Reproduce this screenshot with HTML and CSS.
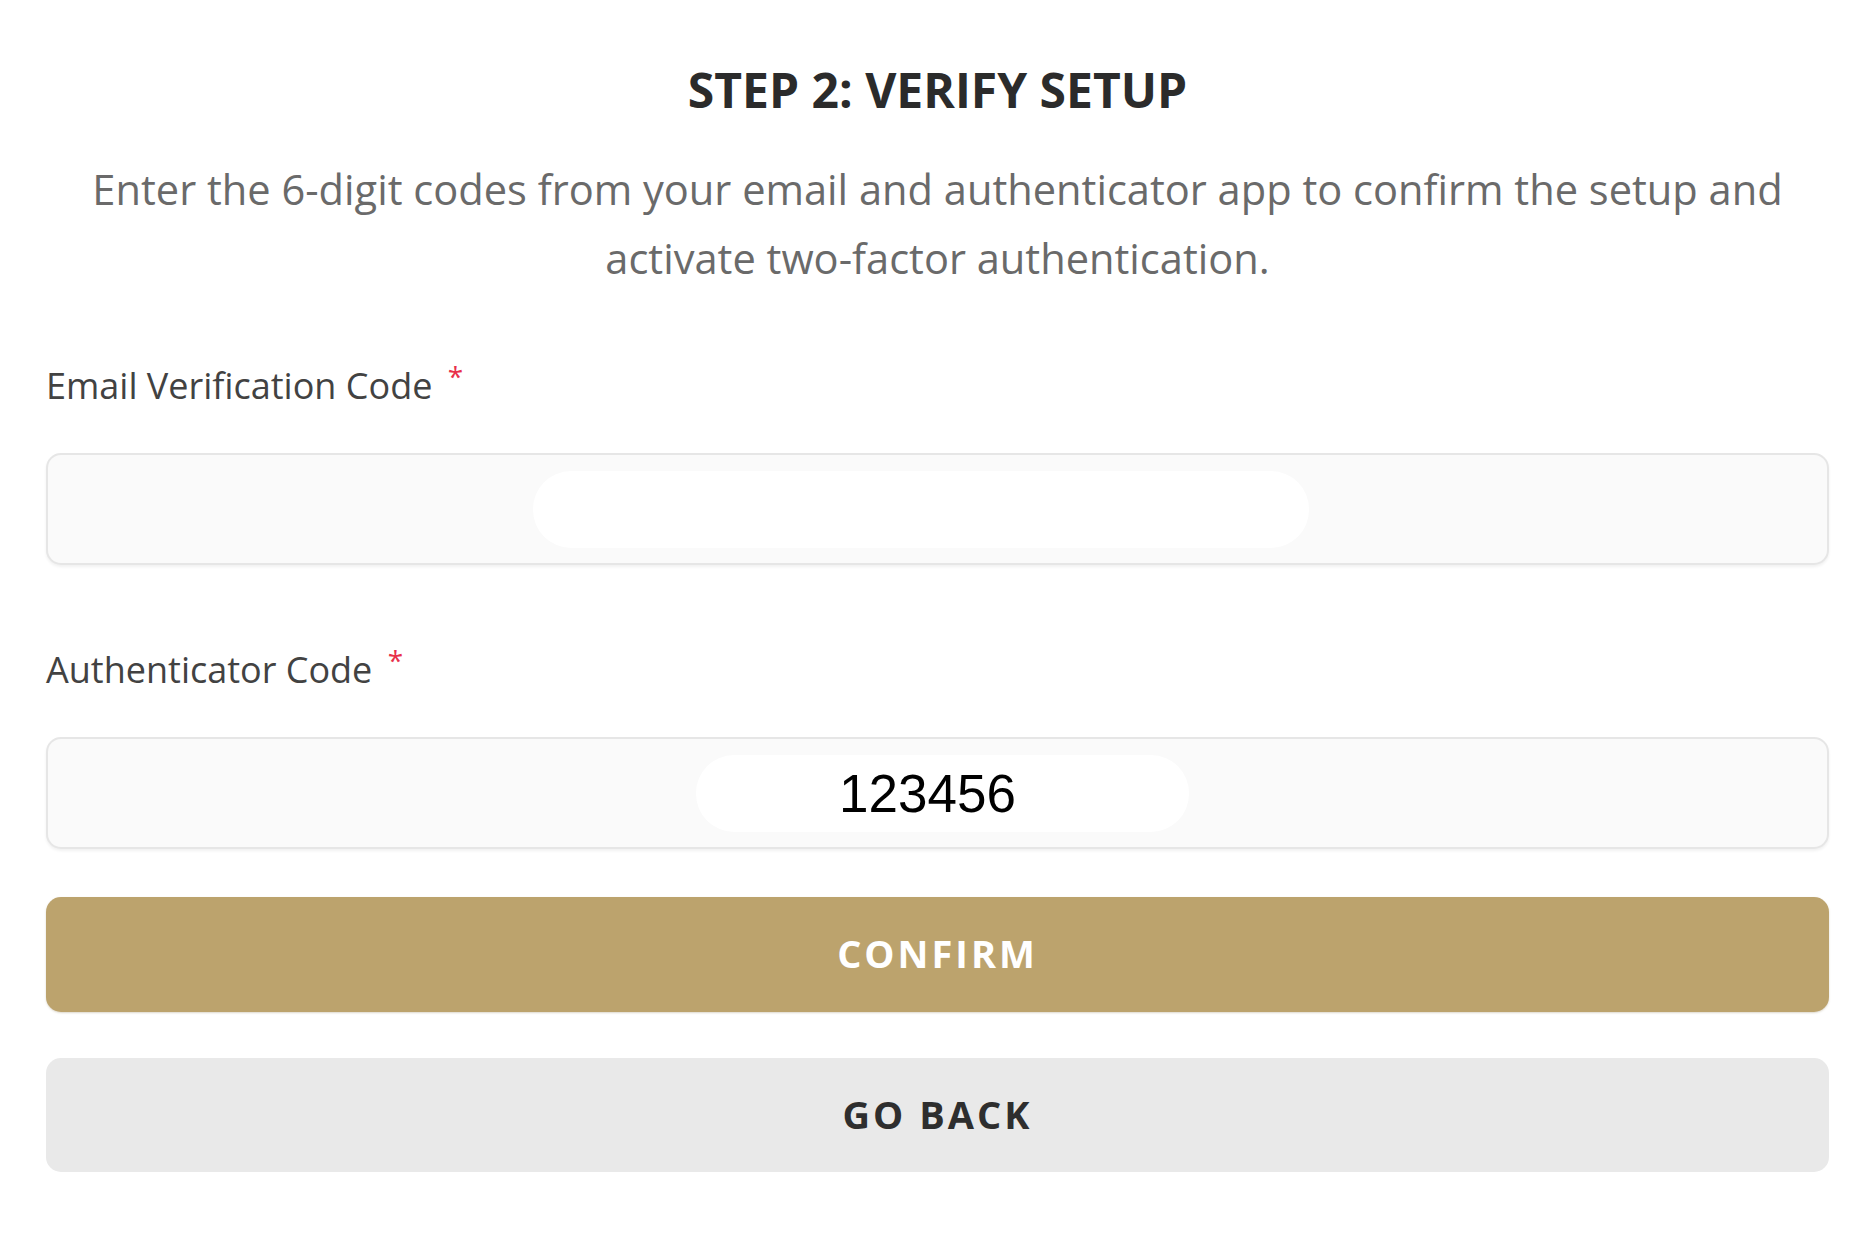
FILE: index.html
```html
<!DOCTYPE html>
<html lang="en">
<head>
<meta charset="utf-8">
<title>Step 2: Verify Setup</title>
<link rel="stylesheet" href="styles.css">
</head>
<body>
<main class="panel">
  <h1 class="title">STEP 2: VERIFY SETUP</h1>
  <p class="intro">Enter the 6-digit codes from your email and authenticator app to confirm the setup and activate two-factor authentication.</p>

  <div class="group group-email">
    <label class="label">Email Verification Code <span class="req">*</span></label>
    <div class="field"><span class="blob blob-wide"></span></div>
  </div>

  <div class="group group-auth">
    <label class="label">Authenticator Code <span class="req">*</span></label>
    <div class="field"><span class="blob blob-narrow">123456</span></div>
  </div>

  <button class="btn btn-confirm">CONFIRM</button>
  <button class="btn btn-back">GO BACK</button>
</main>
</body>
</html>
```

FILE: styles.css
```css
html, body {
  margin: 0;
  padding: 0;
  background: #ffffff;
}

body {
  font-family: "Open Sans", "Noto Sans", sans-serif;
}

.panel {
  width: 1783px;
  margin-left: 46px;
  padding-top: 60px;
  display: flex;
  flex-direction: column;
}

.title {
  margin: 0;
  font-size: 48px;
  line-height: 60px;
  font-weight: 700;
  color: #2b2b2b;
  text-align: center;
}

.intro {
  margin: 35px 0 0;
  font-size: 41.6px;
  line-height: 69px;
  font-weight: 400;
  color: #6a6a6a;
  text-align: center;
  padding: 0 20px;
}

.group {
  display: flex;
  flex-direction: column;
}

.group-email {
  margin-top: 61px;
}

.group-auth {
  margin-top: 73px;
}

.label {
  display: block;
  font-size: 36px;
  line-height: 44px;
  font-weight: 500;
  color: #424242;
}

.req {
  color: #e8304a;
  font-size: 28px;
  vertical-align: 12px;
  margin-left: 6px;
}

.field {
  margin-top: 45px;
  height: 108px;
  box-sizing: content-box;
  border: 2px solid #e6e6e6;
  border-radius: 15px;
  background: #fafafa;
  box-shadow: 0 2px 3px rgba(0, 0, 0, 0.06);
  display: flex;
  align-items: center;
  justify-content: center;
}

.blob {
  display: flex;
  align-items: center;
  justify-content: center;
  box-sizing: border-box;
  height: 77px;
  background: #ffffff;
  border-radius: 38px;
  font-family: "Liberation Sans", Arial, sans-serif;
  font-size: 53px;
  color: #000000;
}

.blob-wide {
  width: 776px;
  margin-right: 34px;
}

.blob-narrow {
  width: 493px;
  margin-left: 10px;
  padding-right: 30px;
}

.btn {
  display: block;
  width: 100%;
  border: none;
  border-radius: 15px;
  font-family: "Open Sans", "Noto Sans", sans-serif;
  font-weight: 700;
  font-size: 38px;
  letter-spacing: 3px;
  padding-bottom: 4px;
  cursor: pointer;
}

.btn-confirm {
  margin-top: 48px;
  height: 115px;
  background: #bca36d;
  color: #ffffff;
  box-shadow: 0 1px 2px rgba(120, 100, 50, 0.25);
}

.btn-back {
  margin-top: 46px;
  height: 114px;
  background: #e9e9e9;
  color: #2e2e2e;
}
```
